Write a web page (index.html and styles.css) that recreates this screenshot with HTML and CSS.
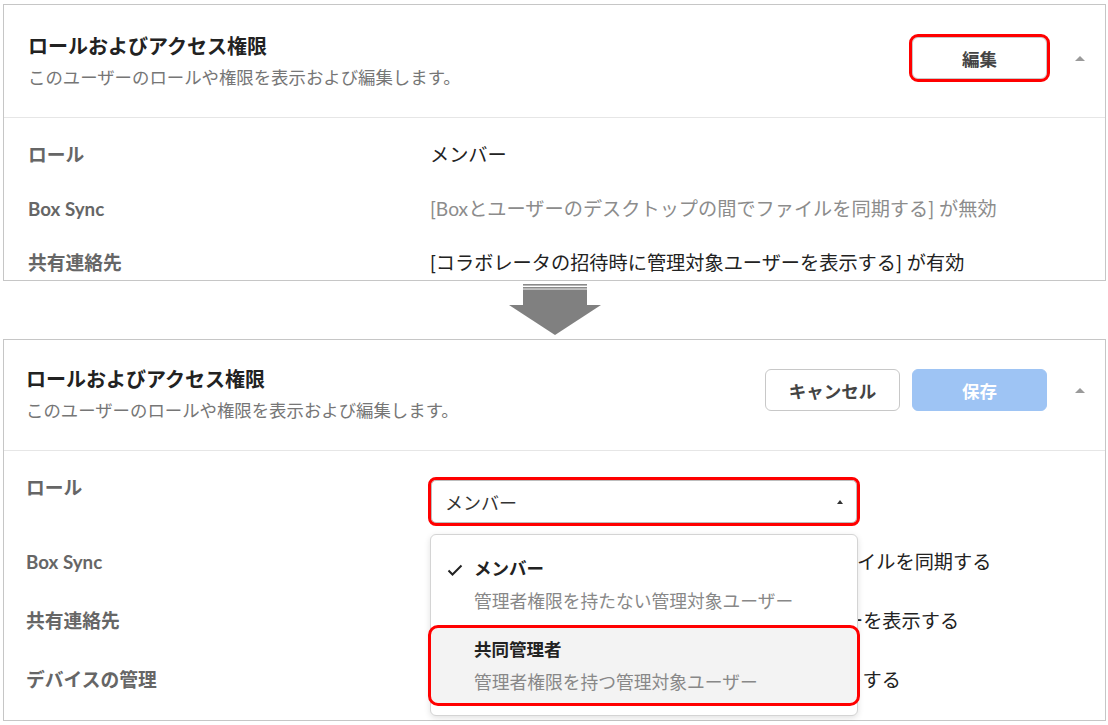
FILE: index.html
```html
<!DOCTYPE html>
<html lang="ja">
<head>
<meta charset="utf-8">
<title>ロールおよびアクセス権限</title>
<link rel="stylesheet" href="styles.css">
</head>
<body>
<main class="page">
  <section class="panel panel--view">
    <header class="panel-header">
      <div class="panel-heading">
        <h2 class="panel-title">ロールおよびアクセス権限</h2>
        <p class="panel-subtitle">このユーザーのロールや権限を表示および編集します。</p>
      </div>
      <div class="panel-actions">
        <button class="btn btn--secondary is-annotated" type="button">編集</button>
        <span class="collapse-caret" aria-hidden="true"></span>
      </div>
    </header>
    <div class="panel-body">
      <div class="field-row">
        <div class="field-label">ロール</div>
        <div class="field-value">メンバー</div>
      </div>
      <div class="field-row">
        <div class="field-label">Box Sync</div>
        <div class="field-value is-muted">[Boxとユーザーのデスクトップの間でファイルを同期する] が無効</div>
      </div>
      <div class="field-row">
        <div class="field-label">共有連絡先</div>
        <div class="field-value">[コラボレータの招待時に管理対象ユーザーを表示する] が有効</div>
      </div>
    </div>
  </section>

  <div class="transition-arrow" aria-hidden="true">
    <svg width="92" height="56" viewBox="0 0 92 56">
      <rect x="14" y="3" width="64" height="1.6" fill="#8a8a8a"/>
      <rect x="14" y="6" width="64" height="1.6" fill="#8a8a8a"/>
      <rect x="14" y="8.5" width="64" height="16" fill="#808080"/>
      <polygon points="0,24 92,24 46,54" fill="#808080"/>
    </svg>
  </div>

  <section class="panel panel--edit">
    <header class="panel-header">
      <div class="panel-heading">
        <h2 class="panel-title">ロールおよびアクセス権限</h2>
        <p class="panel-subtitle">このユーザーのロールや権限を表示および編集します。</p>
      </div>
      <div class="panel-actions">
        <button class="btn btn--secondary" type="button">キャンセル</button>
        <button class="btn btn--primary" type="button">保存</button>
        <span class="collapse-caret" aria-hidden="true"></span>
      </div>
    </header>
    <div class="panel-body">
      <div class="field-row field-row--select">
        <div class="field-label">ロール</div>
        <div class="select">
          <div class="select-box is-annotated">
            <span class="select-text">メンバー</span>
            <span class="select-caret" aria-hidden="true"></span>
          </div>
          <ul class="dropdown">
            <li class="option is-selected">
              <svg class="option-check" width="16" height="12" viewBox="0 0 16 12" aria-hidden="true">
                <path d="M1.5 6.5 L5.5 10.5 L14.5 1.5" fill="none" stroke="#222" stroke-width="2"/>
              </svg>
              <div class="option-title">メンバー</div>
              <div class="option-desc">管理者権限を持たない管理対象ユーザー</div>
            </li>
            <li class="option is-highlighted">
              <div class="option-title">共同管理者</div>
              <div class="option-desc">管理者権限を持つ管理対象ユーザー</div>
            </li>
          </ul>
        </div>
      </div>
      <div class="field-row">
        <div class="field-label">Box Sync</div>
        <div class="field-value"><span class="toggle"></span>Boxとユーザーのデスクトップの間でファイルを同期する</div>
      </div>
      <div class="field-row">
        <div class="field-label">共有連絡先</div>
        <div class="field-value"><span class="toggle is-on"></span>コラボレータの招待時に管理対象ユーザーを表示する</div>
      </div>
      <div class="field-row">
        <div class="field-label">デバイスの管理</div>
        <div class="field-value"><span class="toggle"></span>ユーザーのデバイスをリモートでリセットする</div>
      </div>
    </div>
  </section>
</main>
</body>
</html>
```

FILE: styles.css
```css
* {
  box-sizing: border-box;
}

html,
body {
  margin: 0;
  padding: 0;
  background: #fff;
}

body {
  font-family: Lato, "Noto Sans CJK JP", sans-serif;
  color: #222;
}

.page {
  width: 1108px;
  padding: 4px 0 0 3px;
}

.panel {
  width: 1103px;
  border: 1px solid #c6c6c6;
  background: #fff;
}

/* header */
.panel-header {
  display: flex;
  align-items: flex-start;
  height: 113px;
  padding: 27px 20px 0 24px;
  border-bottom: 1px solid #e6e6e6;
}

.panel--edit .panel-header {
  height: 111px;
  padding-top: 25px;
  padding-left: 22px;
}

.panel-heading {
  flex: 1;
}

.panel-title {
  margin: 0;
  font-size: 20px;
  line-height: 28px;
  font-weight: 700;
  color: #222;
}

.panel-subtitle {
  margin: 6px 0 0;
  font-size: 17.4px;
  line-height: 24px;
  color: #767676;
}

.panel-actions {
  display: flex;
  align-items: center;
  margin-top: 5px;
}

.panel--edit .panel-actions {
  margin-top: 4px;
}

.btn {
  width: 135px;
  height: 42px;
  padding: 0;
  border: 1px solid #c8c8c8;
  border-radius: 6px;
  background: #fff;
  font-family: inherit;
  font-size: 17.5px;
  font-weight: 700;
  color: #444;
}

.btn + .btn {
  margin-left: 12px;
}

.btn--primary {
  background: #9ec4f4;
  border-color: #9ec4f4;
  color: #fff;
}

.is-annotated {
  outline: 3px solid #ff0000;
}

.collapse-caret {
  width: 0;
  height: 0;
  margin-left: 28px;
  border-left: 5px solid transparent;
  border-right: 5px solid transparent;
  border-bottom: 5px solid #9a9a9a;
}

/* body */
.panel-body {
  display: flex;
  flex-direction: column;
  gap: 30px;
  padding: 25px 20px 5px 24px;
}

.field-row {
  display: flex;
  align-items: center;
  min-height: 24px;
}

.field-label {
  flex: none;
  width: 402px;
  font-size: 18.75px;
  line-height: 24px;
  font-weight: 700;
  color: #666;
}

.field-value {
  display: flex;
  align-items: center;
  font-size: 19.2px;
  line-height: 24px;
  color: #222;
  white-space: nowrap;
}

.field-value.is-muted {
  color: #8c8c8c;
}

.panel--edit .panel-body {
  gap: 18px;
  padding: 25px 20px 20px 22px;
}

.panel--edit .field-label {
  width: 405px;
}

.panel--edit .field-row {
  min-height: 41px;
}

.panel--edit .field-row--select {
  align-items: flex-start;
  min-height: 47px;
}

.toggle {
  flex: none;
  width: 52px;
  height: 28px;
  margin-right: 16px;
  border-radius: 14px;
  background: #d6d6d6;
}

.toggle.is-on {
  background: #0061d5;
}

/* select */
.select {
  position: relative;
  z-index: 5;
  width: 426px;
  margin-top: 4px;
}

.select-box {
  display: flex;
  align-items: center;
  height: 43px;
  padding: 0 13px;
  border: 1px solid #bdbdbd;
  border-radius: 5px;
  background: #fff;
  font-size: 18px;
  color: #333;
}

.select-caret {
  margin-left: auto;
  width: 0;
  height: 0;
  border-left: 3.5px solid transparent;
  border-right: 3.5px solid transparent;
  border-bottom: 4px solid #333;
}

.dropdown {
  position: absolute;
  top: 54px;
  left: -1px;
  width: 428px;
  margin: 0;
  padding: 12px 0;
  list-style: none;
  background: #fff;
  border: 1px solid #d4d4d4;
  border-radius: 6px;
  box-shadow: 0 2px 6px rgba(0, 0, 0, 0.12);
  display: flex;
  flex-direction: column;
  gap: 6px;
}

.option {
  position: relative;
  height: 75px;
  padding: 10px 16px 9px 43px;
}

.option-check {
  position: absolute;
  left: 16px;
  top: 17px;
}

.option-title {
  font-size: 17.5px;
  line-height: 24px;
  font-weight: 700;
  color: #222;
}

.option-desc {
  margin-top: 8px;
  font-size: 17.75px;
  line-height: 24px;
  color: #888;
}

.option.is-highlighted {
  background: #f3f3f3;
  border-radius: 7px;
  outline: 3px solid #ff0000;
}

/* arrow between states */
.transition-arrow {
  display: flex;
  justify-content: center;
  width: 1103px;
  height: 58px;
}
```
